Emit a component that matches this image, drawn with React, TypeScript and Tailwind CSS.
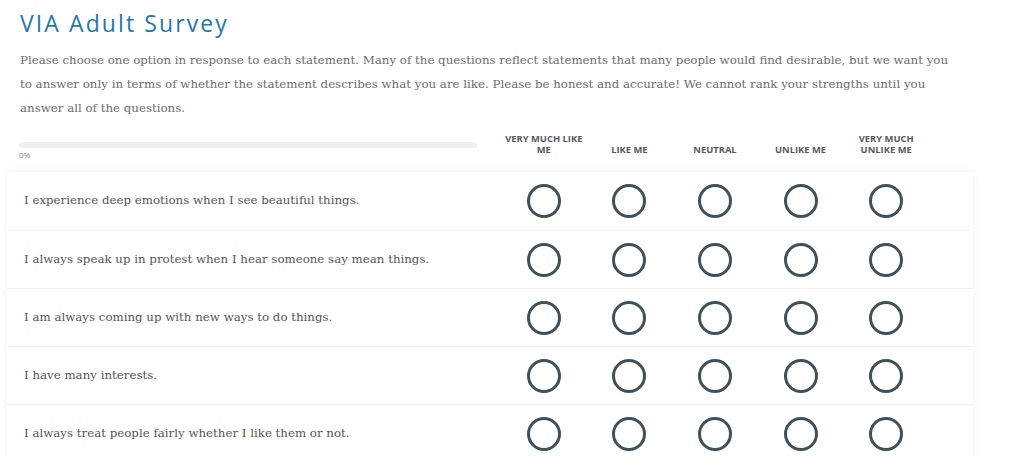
import React from "react";

const options = [
  "Very much like me",
  "Like me",
  "Neutral",
  "Unlike me",
  "Very much unlike me",
];

const statements = [
  "I experience deep emotions when I see beautiful things.",
  "I always speak up in protest when I hear someone say mean things.",
  "I am always coming up with new ways to do things.",
  "I have many interests.",
  "I always treat people fairly whether I like them or not.",
];

const serif = "font-['DejaVu_Serif','Liberation_Serif',serif]";

export default function App() {
  return (
    <div className="min-h-[457px] w-[1024px] overflow-hidden bg-white">
      <div className="px-5 pt-[9px]">
        <h1 className="font-['Open_Sans',sans-serif] text-[23px] leading-[28px] tracking-[2.1px] text-[#2379a8]">
          VIA Adult Survey
        </h1>
        <p
          className={`${serif} mt-[11px] whitespace-nowrap text-[11.8px] leading-[24px] text-[#6c6c6c]`}
        >
          Please choose one option in response to each statement. Many of the
          questions reflect statements that many people would find desirable,
          but we want you
          <br />
          to answer only in terms of whether the statement describes what you
          are like. Please be honest and accurate! We cannot rank your strengths
          until you
          <br />
          answer all of the questions.
        </p>
      </div>

      <div className="mt-[7px] flex items-start pl-[7px]">
        <div className="w-[494px] pl-3 pr-6 pt-[15px]">
          <div className="h-[6px] w-full rounded-full bg-[#f0f0f0]" />
          <div className="mt-[2px] font-['Open_Sans',sans-serif] text-[8px] leading-[10px] text-[#888]">
            0%
          </div>
        </div>
        <div className="flex">
          {options.map((o) => (
            <div
              key={o}
              className="flex h-[28px] w-[85.6px] items-end justify-center text-center font-['Open_Sans',sans-serif] text-[9.4px] font-bold uppercase leading-[11px] text-[#555a5e]"
            >
              <span className="w-[84px]">{o}</span>
            </div>
          ))}
        </div>
      </div>

      <div className="ml-[7px] mt-[12px] w-[966px] bg-white shadow-[0_0_8px_rgba(0,0,0,0.06)]">
        {statements.map((s, i) => (
          <div
            key={s}
            className={`flex h-[58px] items-center ${
              i > 0 ? "border-t border-[#f2f2f2]" : ""
            }`}
          >
            <div
              className={`${serif} w-[494px] pl-[17px] text-[11.8px] text-[#555]`}
            >
              {s}
            </div>
            {options.map((o) => (
              <div key={o} className="flex w-[85.6px] justify-center">
                <button className="h-[34px] w-[34px] rounded-full border-[3px] border-[#3f5059] bg-white" />
              </div>
            ))}
          </div>
        ))}
      </div>
    </div>
  );
}
